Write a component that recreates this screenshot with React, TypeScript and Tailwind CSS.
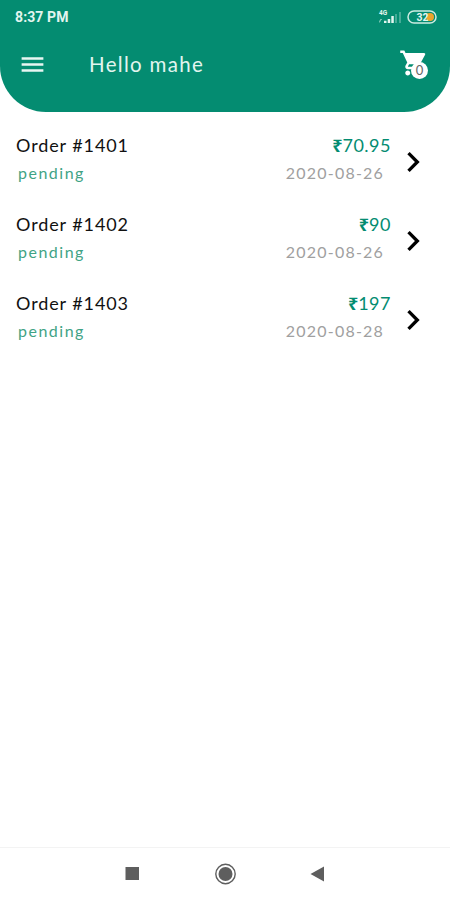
import { MdChevronRight, MdMenu, MdShoppingCart } from 'react-icons/md';

type Order = { id: number; total: string; date: string; status: string };

const orders: Order[] = [
  { id: 1401, total: '70.95', date: '2020-08-26', status: 'pending' },
  { id: 1402, total: '90', date: '2020-08-26', status: 'pending' },
  { id: 1403, total: '197', date: '2020-08-28', status: 'pending' },
];

function StatusBar() {
  return (
    <div className="flex h-[33px] items-center justify-between pl-[15px] pr-[13px]">
      <span className="font-[Roboto] text-[14px] font-bold leading-none tracking-[0.1px] text-[#e2f5ef]">8:37 PM</span>
      <div className="flex items-center gap-[5px]">
        <svg width="24" height="16" viewBox="0 0 24 16" className="text-[#e2f5ef]">
          <text x="1" y="6" fontSize="6.5" fontWeight="700" fontFamily="Roboto" fill="currentColor">4G</text>
          <path d="M1 13.500v-2h1v-1.500h2v1H3v1.500H2v1z" fill="currentColor" opacity="0.5" />
          <path d="M6 14v-2.2h2.5V14zM9.700 14v-3.900h2.500V14zM13.300 14V7h2.500v7z" fill="currentColor" />
          <path d="M17 14V5h2v9zM21 14V3h2v11z" fill="currentColor" opacity="0.3" />
        </svg>
        <svg width="30" height="14" viewBox="0 0 30 14">
          <rect x="1" y="1" width="28" height="12" rx="6" fill="none" stroke="#cdebe2" strokeWidth="1.5" />
          <circle cx="23" cy="7" r="4" fill="#eda42d" />
          <text x="9.500" y="10.8" fontSize="10.5" fontWeight="700" fontFamily="Roboto" fill="#e2f5ef">32</text>
        </svg>
      </div>
    </div>
  );
}

function Header() {
  return (
    <header className="h-28 rounded-b-[46px] bg-[#048c71]">
      <StatusBar />
      <div className="flex h-[62px] items-center pl-[18px] pr-[20px]">
        <MdMenu size={29} className="text-[#e8f6f2]" />
        <h1 className="ml-[42px] flex-1 pt-px text-[20.5px] tracking-[1.3px] text-[#e2f5ef]">Hello mahe</h1>
        <div className="relative mb-[2px] h-[30px] w-[31px]">
          <MdShoppingCart size={30} className="text-white" />
          <span className="absolute left-[12px] top-[14px] flex size-[17px] items-center justify-center rounded-full bg-white text-[13px] leading-none text-[#666]">
            0
          </span>
        </div>
      </div>
    </header>
  );
}

function OrderRow({ order }: { order: Order }) {
  return (
    <li className="flex h-[79px] pl-4 pr-[17px]">
      <div className="flex-1 pt-[11px]">
        <div className="text-[18px] leading-7 tracking-[0.9px] text-[#111]">Order #{order.id}</div>
        <div className="ml-[2px] text-[16px] leading-7 tracking-[1.5px] text-[#3fa385]">{order.status}</div>
      </div>
      <div className="pt-[11px] text-right">
        <div className="text-[18px] leading-7 tracking-[0.5px] text-[#048c71]">
          <span className="font-['Noto_Sans'] text-[18px] font-bold leading-none tracking-normal">₹</span>
          {order.total}
        </div>
        <div className="mr-[7px] text-[16px] leading-7 tracking-[1.2px] text-[#a0a0a0]">{order.date}</div>
      </div>
      <MdChevronRight size={40} className="ml-[2px] mt-[22px] text-black" />
    </li>
  );
}

function NavBar() {
  return (
    <nav className="flex h-[53px] items-center border-t border-[#f3f3f3] pl-[125px] pr-[125px] text-[#5e5e5e]">
      <svg width="200" height="24" viewBox="0 0 200 24" fill="currentColor">
        <rect x="0.5" y="5" width="13.5" height="13" />
        <circle cx="100.5" cy="12" r="9.7" fill="none" stroke="currentColor" strokeWidth="1.4" />
        <circle cx="100.5" cy="12" r="7" />
        <path d="M185.500 12L199 4.500v15z" />
      </svg>
    </nav>
  );
}

export default function App() {
  return (
    <div className="flex h-[900px] w-[450px] flex-col overflow-hidden bg-white font-[Lato,'Liberation_Sans',sans-serif]">
      <Header />
      <ul className="flex-1 pt-[8px]">
        {orders.map((order) => (
          <OrderRow key={order.id} order={order} />
        ))}
      </ul>
      <NavBar />
    </div>
  );
}
